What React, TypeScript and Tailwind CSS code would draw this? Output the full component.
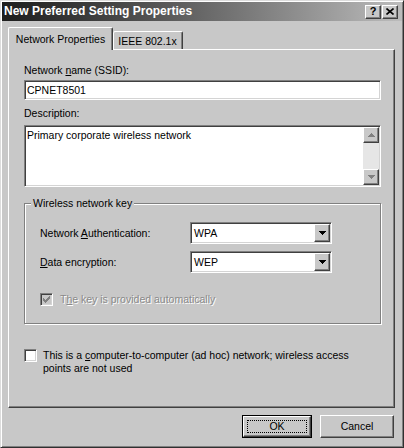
import React from 'react';

const raised =
  'border border-t-white border-l-white border-b-[#404040] border-r-[#404040] shadow-[inset_-1px_-1px_#808080]';
const sunken =
  'border border-t-[#808080] border-l-[#808080] border-b-white border-r-white shadow-[inset_1px_1px_#404040,inset_-1px_-1px_#d4d4d4]';

const Key = ({ children }: { children: React.ReactNode }) => (
  <span className="underline underline-offset-[1px]">{children}</span>
);

const Triangle = ({ up, color }: { up?: boolean; color: string }) => (
  <svg width="7" height="4" viewBox="0 0 7 4" shapeRendering="crispEdges">
    <polygon points={up ? '0,4 7,4 3.5,0' : '0,0 7,0 3.5,4'} fill={color} />
  </svg>
);

const Check = ({ color }: { color: string }) => (
  <svg width="7" height="7" viewBox="0 0 7 7" shapeRendering="crispEdges">
    <polygon points="0,2 2,4 6,0 7,0 7,2 2,7 0,5" fill={color} />
  </svg>
);

const CheckBox = ({ checked, disabled }: { checked?: boolean; disabled?: boolean }) => (
  <div
    className={`w-[13px] h-[13px] shrink-0 flex items-center justify-center ${sunken} ${
      disabled ? 'bg-[#c8c8c8]' : 'bg-white'
    }`}
  >
    {checked && <Check color={disabled ? '#808080' : '#000'} />}
  </div>
);

const Combo = ({ value }: { value: string }) => (
  <div className={`w-[142px] h-[22px] p-px bg-white flex items-center ${sunken}`}>
    <span className="flex-1 pl-[2px]">{value}</span>
    <div className={`w-[16px] h-[18px] bg-[#c8c8c8] flex items-center justify-center ${raised}`}>
      <Triangle color="#000" />
    </div>
  </div>
);

export default function App() {
  return (
    <div className="w-[404px] h-[448px] p-px flex flex-col bg-[#c8c8c8] text-black text-[10.5px] leading-[13px] font-['Liberation_Sans',Arial,sans-serif] border border-t-[#dcdcdc] border-l-[#dcdcdc] border-b-[#303030] border-r-[#303030] shadow-[inset_1px_1px_#fff,inset_-1px_-1px_#808080]">
      {/* title bar */}
      <div className="h-[19px] flex items-center pl-[2px] pr-[4px] bg-linear-to-r from-[#1e1e1e] to-[#bcbcbc]">
        <span className="flex-1 text-white font-bold text-[12px] leading-[15px]">
          New Preferred Setting Properties
        </span>
        <div className="flex gap-px">
          <div className={`w-[16px] h-[14px] bg-[#c8c8c8] flex items-center justify-center font-bold text-[11px] leading-[11px] ${raised}`}>
            ?
          </div>
          <div className={`w-[16px] h-[14px] bg-[#c8c8c8] flex items-center justify-center ${raised}`}>
            <svg width="8" height="7" viewBox="0 0 8 7">
              <path d="M0.5 0.5 L7.5 6.5 M7.5 0.5 L0.5 6.5" stroke="#000" strokeWidth="1.6" />
            </svg>
          </div>
        </div>
      </div>

      {/* tabs */}
      <div className="mt-[6px] ml-[6px] h-[22px] flex items-end">
        <div className="relative z-10 -mb-px w-[105px] h-[23px] bg-[#c8c8c8] border-t border-l border-r border-t-white border-l-white border-r-[#404040] rounded-t-[2px] shadow-[inset_-1px_0_#808080] flex justify-center pt-[5px]">
          Network Properties
        </div>
        <div className="w-[70px] h-[18px] bg-[#c8c8c8] border-t border-r border-t-white border-r-[#404040] rounded-t-[2px] shadow-[inset_-1px_0_#808080,inset_1px_0_#fff] flex justify-center pt-[3px]">
          IEEE 802.1x
        </div>
      </div>

      {/* panel */}
      <div className={`ml-[6px] w-[387px] h-[359px] pt-[14px] pl-[15px] ${raised}`}>
        <div>
          Network <Key>n</Key>ame (SSID):
        </div>
        <div className={`mt-[3px] w-[357px] h-[20px] bg-white flex items-center pl-[2px] ${sunken}`}>
          CPNET8501
        </div>

        <div className="mt-[7px]">Description:</div>
        <div className={`mt-[5px] w-[357px] h-[62px] p-px bg-white flex ${sunken}`}>
          <div className="flex-1 pl-[1px] pt-[2px]">Primary corporate wireless network</div>
          <div className="w-[16px] flex flex-col justify-between bg-[#e6e6e6]">
            <div className={`h-[16px] bg-[#c8c8c8] flex items-center justify-center ${raised}`}>
              <Triangle up color="#808080" />
            </div>
            <div className={`h-[16px] bg-[#c8c8c8] flex items-center justify-center ${raised}`}>
              <Triangle color="#808080" />
            </div>
          </div>
        </div>

        <fieldset className="mt-[10px] w-[357px] border border-[#808080] shadow-[inset_1px_1px_#fff,1px_1px_#fff]">
          <legend className="ml-[6px] px-[2px] bg-[#c8c8c8]">Wireless network key</legend>
          <div className="pl-[15px] pt-[12px] pb-[17px]">
            <div className="h-[22px] flex items-center">
              <span className="w-[150px]">
                Network <Key>A</Key>uthentication:
              </span>
              <Combo value="WPA" />
            </div>
            <div className="mt-[7px] h-[22px] flex items-center">
              <span className="w-[150px]">
                <Key>D</Key>ata encryption:
              </span>
              <Combo value="WEP" />
            </div>
            <div className="mt-[20px] flex items-center gap-[7px]">
              <CheckBox checked disabled />
              <span className="text-[#8a8a8a] [text-shadow:1px_1px_0_#fff]">
                T<Key>h</Key>e key is provided automatically
              </span>
            </div>
          </div>
        </fieldset>

        <div className="mt-[25px] flex items-start gap-[6px]">
          <CheckBox />
          <span>
            This is a <Key>c</Key>omputer-to-computer (ad hoc) network; wireless access
            <br />
            points are not used
          </span>
        </div>
      </div>

      {/* buttons */}
      <div className="mt-[7px] pr-[8px] flex justify-end gap-[8px]">
        <div className="w-[70px] h-[23px] border border-black flex">
          <div className={`flex-1 p-[3px] flex ${raised}`}>
            <div className="flex-1 border border-dotted border-black flex items-center justify-center">
              OK
            </div>
          </div>
        </div>
        <div className={`w-[74px] h-[23px] flex items-center justify-center ${raised}`}>Cancel</div>
      </div>
    </div>
  );
}
